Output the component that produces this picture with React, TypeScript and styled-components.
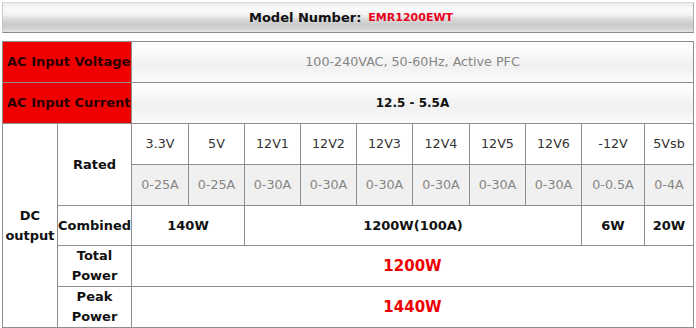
import React from 'react';
import styled, { createGlobalStyle } from 'styled-components';

const GlobalStyle = createGlobalStyle`
  html, body {
    margin: 0;
    padding: 0;
    background: #ffffff;
  }
  body {
    font-family: 'DejaVu Sans', Verdana, sans-serif;
  }
`;

const Page = styled.div`
  width: 696px;
  padding: 2px 0 0 2px;
  box-sizing: border-box;
`;

const HeaderBar = styled.div`
  width: 692px;
  height: 31px;
  box-sizing: border-box;
  display: flex;
  align-items: center;
  justify-content: center;
  padding-left: 6px;
  border-top: 1px solid #d8d8d8;
  border-left: 1px solid #c8c8c8;
  border-right: 1px solid #b0b0b0;
  border-bottom: 1px solid #8c8c8c;
  background: linear-gradient(
    180deg,
    #ececec 0%,
    #fafafa 22%,
    #f2f2f2 40%,
    #d8d8d8 58%,
    #cacaca 75%,
    #d4d4d4 90%,
    #e4e4e4 100%
  );
  font-size: 13px;
  font-weight: bold;
  color: #111;
`;

const ModelName = styled.span`
  color: #e8001c;
  font-size: 11px;
  margin-left: 7px;
`;

const SpecTable = styled.table`
  margin-top: 8px;
  width: 691px;
  border-collapse: collapse;
  table-layout: fixed;
  border: 1px solid #8e8e8e;
`;

const Row = styled.tr<{ h: number }>`
  height: ${({ h }) => h}px;
`;

const Cell = styled.td<{ tone?: 'plain' | 'soft' | 'gloss' | 'red' }>`
  padding: 0;
  border: 1px solid #8e8e8e;
  text-align: center;
  vertical-align: middle;
  font-size: 12.7px;
  line-height: 20px;
  color: #333;
  background: ${({ tone }) =>
    tone === 'soft'
      ? '#f0f0f0'
      : tone === 'gloss'
        ? 'linear-gradient(180deg, #ffffff 0%, #f4f4f4 45%, #f1f1f1 60%, #fbfbfb 100%)'
        : tone === 'red'
          ? '#f00000'
          : '#ffffff'};
`;

const Label = styled(Cell)`
  font-size: 13px;
  font-weight: bold;
  color: #111;
`;

const RedLabel = styled(Cell)`
  font-size: 13px;
  font-weight: bold;
  color: #2a0000;
  text-align: left;
  padding-left: 4px;
  white-space: nowrap;
`;

const Muted = styled(Cell)`
  color: #858585;
`;

const Value = styled(Cell)<{ small?: boolean }>`
  font-size: ${({ small }) => (small ? '12px' : '13px')};
  font-weight: bold;
  color: #111;
`;

const BigValue = styled(Cell)`
  font-size: 15px;
  font-weight: bold;
  color: #ee0000;
`;

const widths = [55, 74, 57, 56, 56, 56, 56, 57, 56, 56, 63, 49];

const rails = ['3.3V', '5V', '12V1', '12V2', '12V3', '12V4', '12V5', '12V6', '-12V', '5Vsb'];
const amps = ['0-25A', '0-25A', '0-30A', '0-30A', '0-30A', '0-30A', '0-30A', '0-30A', '0-0.5A', '0-4A'];

export default function App(): JSX.Element {
  return (
    <>
      <GlobalStyle />
      <Page>
        <HeaderBar>
          Model Number:<ModelName>EMR1200EWT</ModelName>
        </HeaderBar>
        <SpecTable>
          <colgroup>
            {widths.map((w, i) => (
              <col key={i} style={{ width: w }} />
            ))}
          </colgroup>
          <tbody>
            <Row h={41}>
              <RedLabel tone="red" colSpan={2}>
                AC Input Voltage
              </RedLabel>
              <Muted tone="gloss" colSpan={10}>
                100-240VAC, 50-60Hz, Active PFC
              </Muted>
            </Row>
            <Row h={41}>
              <RedLabel tone="red" colSpan={2}>
                AC Input Current
              </RedLabel>
              <Value tone="gloss" colSpan={10} small>
                12.5 - 5.5A
              </Value>
            </Row>
            <Row h={41}>
              <Label rowSpan={5}>
                DC
                <br />
                output
              </Label>
              <Label rowSpan={2}>Rated</Label>
              {rails.map((r) => (
                <Cell key={r}>{r}</Cell>
              ))}
            </Row>
            <Row h={41}>
              {amps.map((a, i) => (
                <Muted key={i} tone="soft">
                  {a}
                </Muted>
              ))}
            </Row>
            <Row h={40}>
              <Label>Combined</Label>
              <Value colSpan={2}>140W</Value>
              <Value colSpan={6}>1200W(100A)</Value>
              <Value>6W</Value>
              <Value>20W</Value>
            </Row>
            <Row h={40}>
              <Label>
                Total
                <br />
                Power
              </Label>
              <BigValue colSpan={10}>1200W</BigValue>
            </Row>
            <Row h={40}>
              <Label>
                Peak
                <br />
                Power
              </Label>
              <BigValue colSpan={10}>1440W</BigValue>
            </Row>
          </tbody>
        </SpecTable>
      </Page>
    </>
  );
}
